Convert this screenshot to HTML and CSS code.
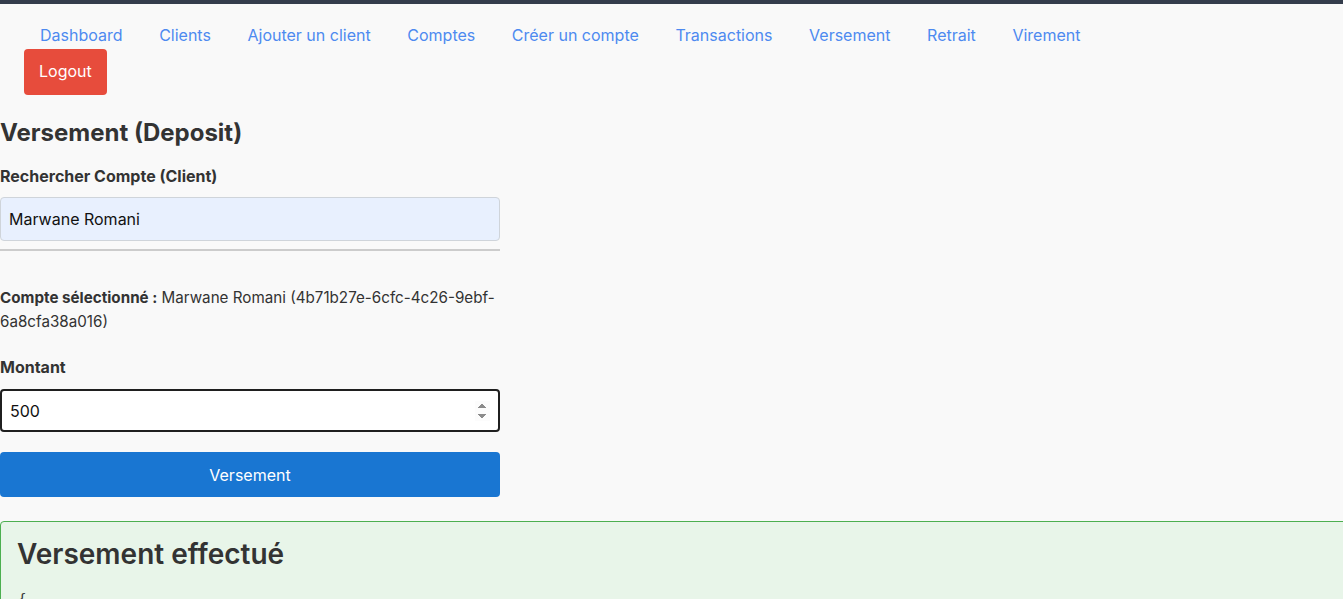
FILE: index.html
```html
<!DOCTYPE html>
<html lang="fr">
<head>
<meta charset="utf-8">
<title>Versement</title>
<link rel="stylesheet" href="styles.css">
</head>
<body>
<div class="topbar"></div>
<header class="header">
  <nav class="nav-links">
    <a href="#">Dashboard</a>
    <a href="#">Clients</a>
    <a href="#">Ajouter un client</a>
    <a href="#">Comptes</a>
    <a href="#">Créer un compte</a>
    <a href="#">Transactions</a>
    <a href="#">Versement</a>
    <a href="#">Retrait</a>
    <a href="#">Virement</a>
  </nav>
  <button class="logout" type="button">Logout</button>
</header>
<main class="main">
  <h2 class="title">Versement (Deposit)</h2>
  <label class="label" for="search">Rechercher Compte (Client)</label>
  <input id="search" class="search" type="text" value="Marwane Romani">
  <div class="results"></div>
  <p class="selected"><strong>Compte sélectionné :</strong> Marwane Romani (4b71b27e-6cfc-4c26-9ebf-6a8cfa38a016)</p>
  <label class="label label-amount" for="amount">Montant</label>
  <input id="amount" class="amount" type="number" value="500">
  <button class="submit" type="button">Versement</button>
  <section class="result">
    <h3 class="result-title">Versement effectué</h3>
    <pre class="result-body">{
  "type": "DEPOSIT",
  "amount": 500
}</pre>
  </section>
</main>
</body>
</html>
```
FILE: styles.css
```css
html {
  overflow: hidden;
}
body {
  margin: 0;
  background: #f9f9f9;
  color: #333;
  font-family: Inter, "Noto Sans", sans-serif;
}
.topbar {
  height: 4px;
  background: #343d4c;
}
.header {
  padding: 0 24px;
}
.nav-links {
  display: flex;
  gap: 4.6px;
  padding-top: 21px;
}
.nav-links a {
  padding: 0 16px;
  font-size: 16px;
  line-height: 20px;
  color: #4d8af0;
  text-decoration: none;
}
.logout {
  display: block;
  margin-top: 4px;
  padding: 11px 15px 13px;
  border: 0;
  border-radius: 4px;
  background: #e74c3c;
  color: #fff;
  font-family: inherit;
  font-size: 16px;
  line-height: 22px;
}
.main {
  padding: 0;
}
.title {
  margin: 24px 0 0;
  font-size: 24px;
  line-height: 28px;
  font-weight: 700;
  color: #333;
}
.label {
  display: block;
  margin-top: 19px;
  font-size: 16px;
  line-height: 20px;
  font-weight: 700;
  color: #333;
}
.search,
.amount {
  display: block;
  box-sizing: border-box;
  width: 500px;
  margin-top: 12px;
  font-family: inherit;
  font-size: 16px;
  color: #111;
  border-radius: 4px;
}
.search {
  height: 44px;
  margin-top: 11px;
  padding: 0 8px;
  border: 1px solid #cfd4da;
  background: #e8f0fe;
}
.results {
  width: 500px;
  margin-top: 8px;
  border-top: 2px solid #cccccc;
}
.selected {
  width: 500px;
  margin: 35px 0 0;
  font-size: 15.2px;
  line-height: 24px;
  color: #333;
}
.label-amount {
  margin-top: 23px;
}
.amount {
  height: 43px;
  margin-top: 12px;
  padding: 0 8px;
  border: 2px solid #1f1f1f;
  background: #fff;
  outline: none;
}
.amount::-webkit-inner-spin-button,
.amount::-webkit-outer-spin-button {
  opacity: 1;
}
.submit {
  display: block;
  width: 500px;
  height: 45px;
  margin-top: 20px;
  border: 0;
  border-radius: 4px;
  background: #1976d2;
  color: #fff;
  font-family: inherit;
  font-size: 16px;
}
.result {
  width: 1400px;
  margin-top: 24px;
  padding: 15px 17px 20px 16px;
  border: 1px solid #4caf50;
  border-radius: 4px;
  background: #e8f5e9;
}
.result-title {
  margin: 0;
  font-size: 28px;
  line-height: 34px;
  font-weight: 600;
  color: #333;
}
.result-body {
  margin: 18px 0 0 1px;
  font-family: "DejaVu Sans Mono", monospace;
  font-size: 14px;
  line-height: 20px;
  color: #333;
}
```
